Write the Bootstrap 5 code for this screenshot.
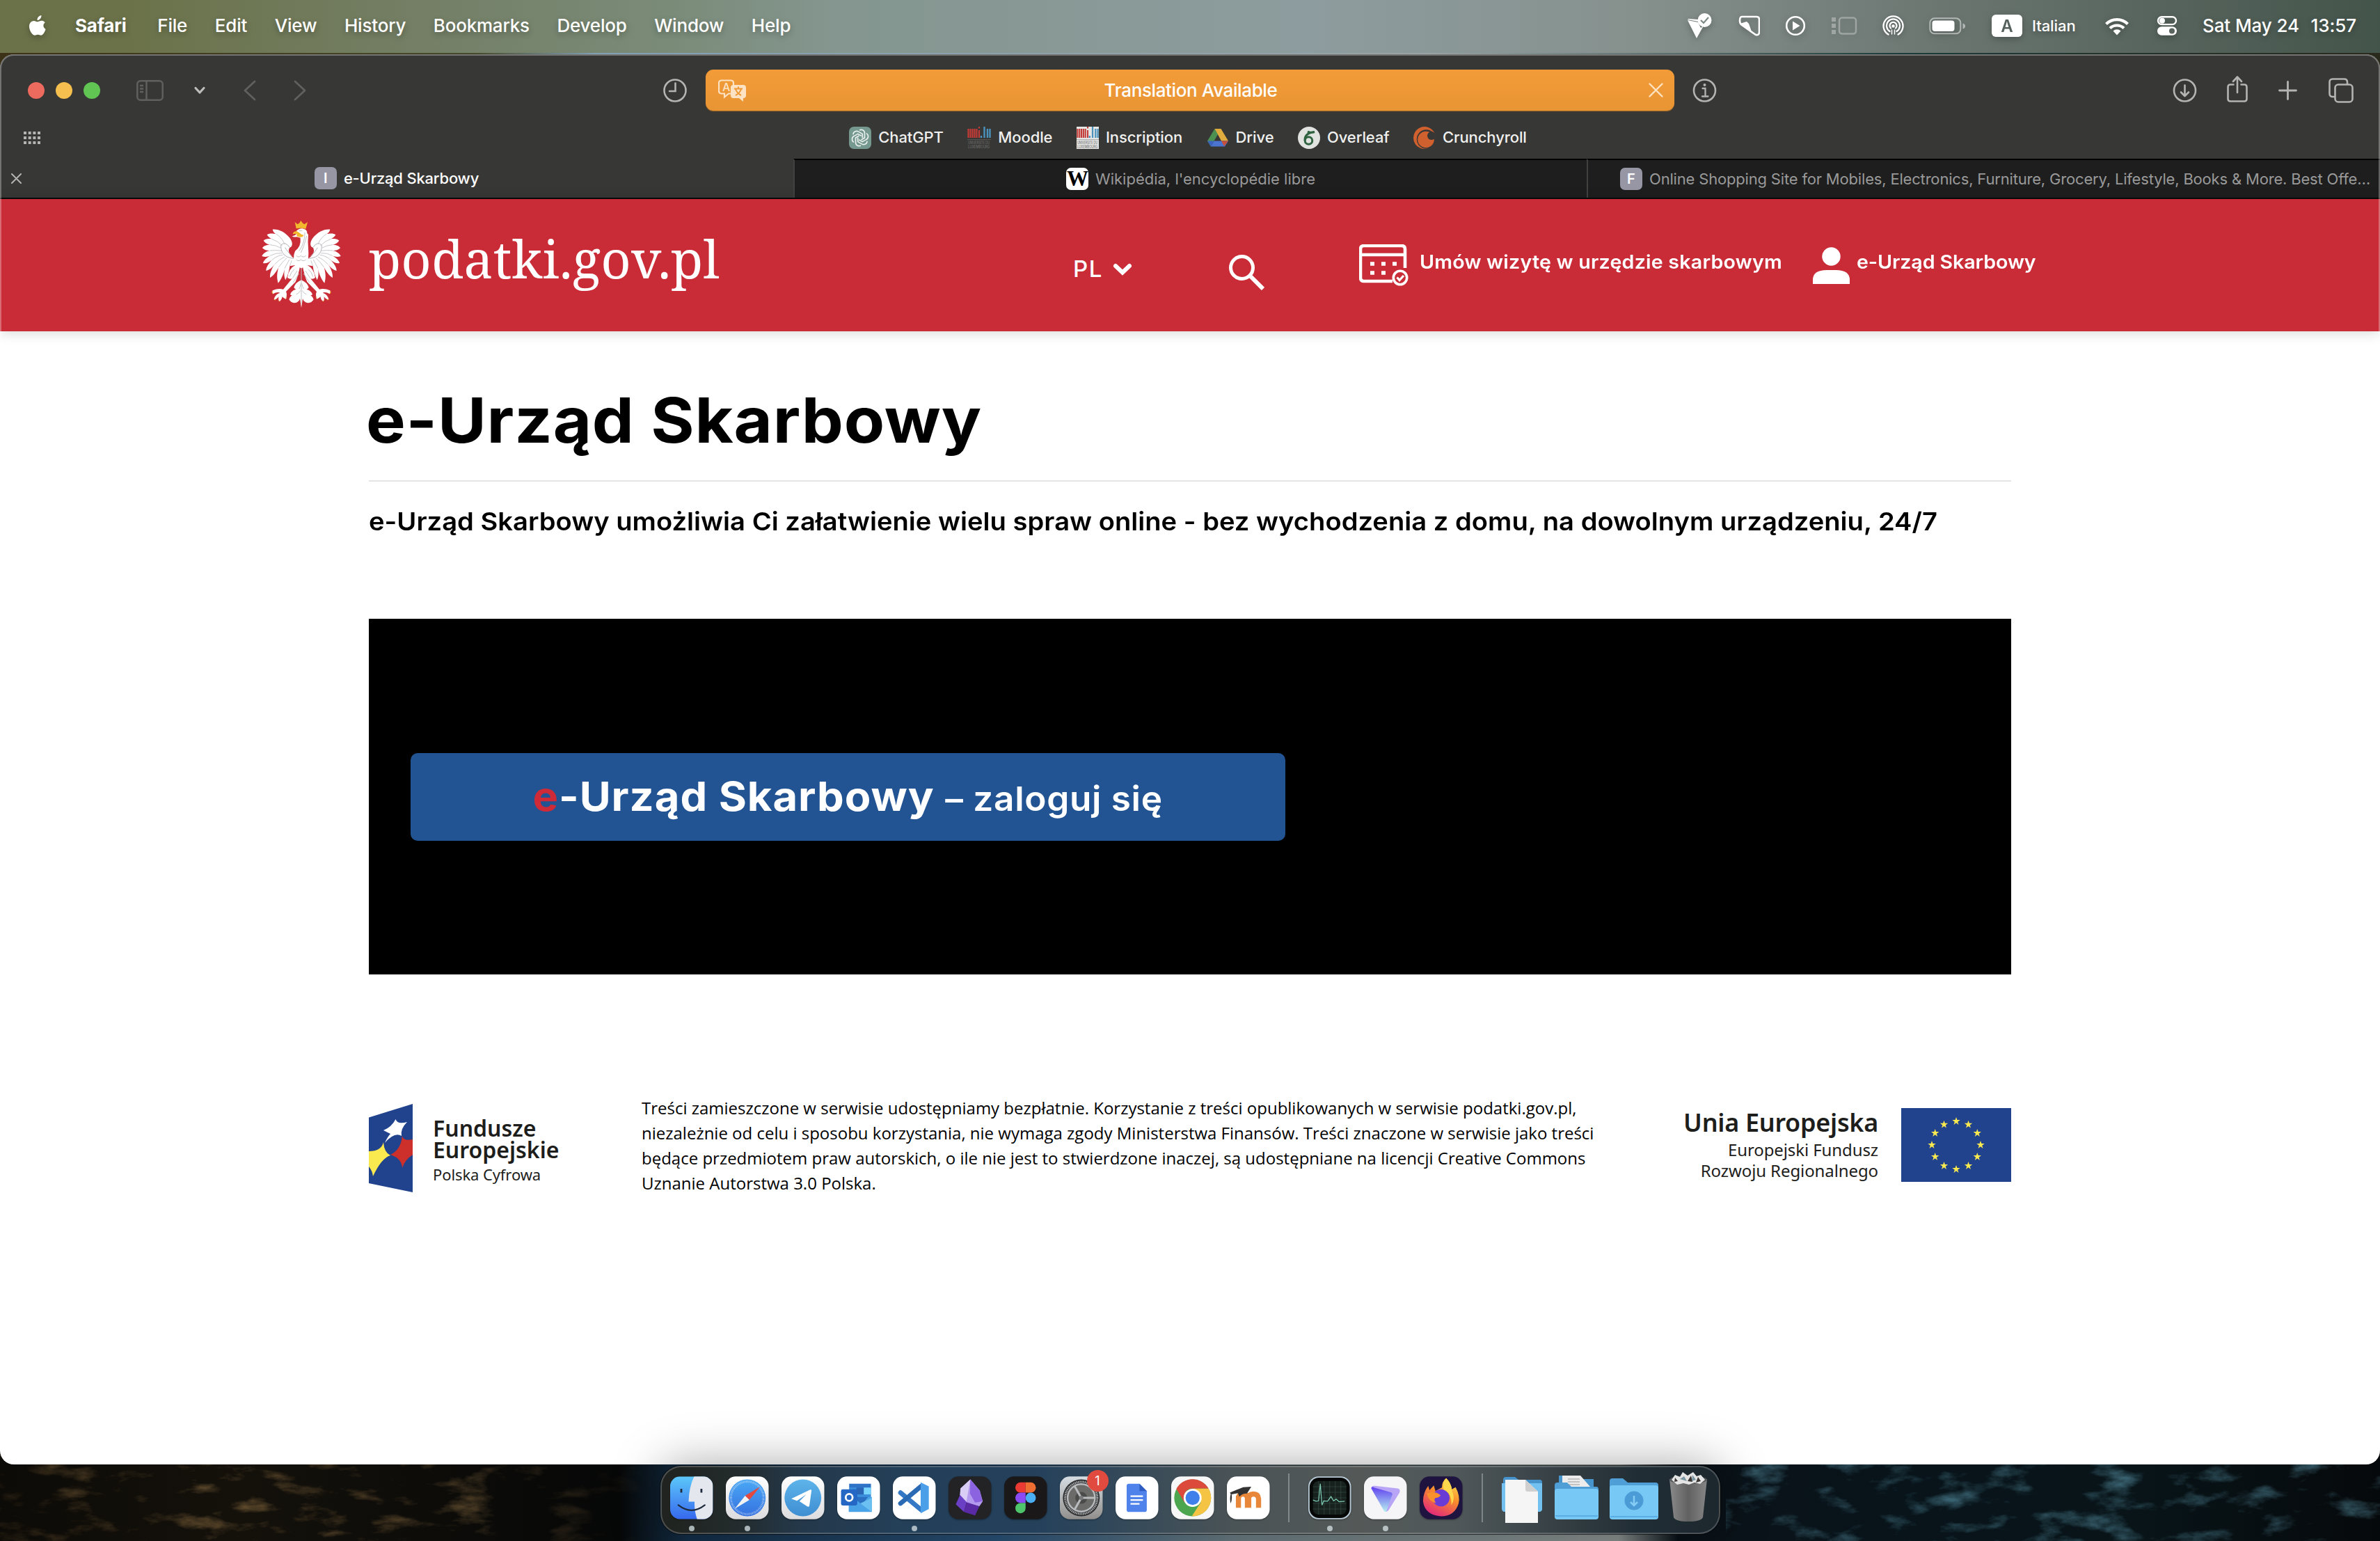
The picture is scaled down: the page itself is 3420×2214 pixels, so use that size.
<!DOCTYPE html>
<html lang="pl">
<head>
<meta charset="utf-8">
<meta name="viewport" content="width=device-width, initial-scale=1">
<title>e-Urząd Skarbowy</title>
<link rel="stylesheet" href="https://cdn.jsdelivr.net/npm/bootstrap@5.3.0/dist/css/bootstrap.min.css">
<style>
html,body{width:3420px;height:2214px;overflow:hidden}
body{font-family:Inter,"Liberation Sans",sans-serif;color:#000;background:#07090a;line-height:1.2;position:relative}
svg{display:block;flex:none}
.wallpaper{position:absolute;left:0;top:0;z-index:-1}
/* macOS menu bar */
.menubar{height:76px;padding:0 34px 2px 41px;color:#fff;font-size:26px;font-weight:500;background:linear-gradient(90deg,#6b7149 0,#6b7249 5%,#747f66 18%,#7a8b78 28%,#84968f 35%,#8d9c9e 55%,#87928f 68%,#737d79 78%,#5d6963 88%,#43544a 100%);text-shadow:0 3px 8px rgba(0,0,0,.3)}
.menubar svg{filter:drop-shadow(0 3px 5px rgba(0,0,0,.25))}
.menus{gap:39.6px;letter-spacing:-.2px;margin-left:41px}
.menus b{font-weight:700;margin-right:5px}
.tray{gap:36px}
.lang{gap:14px;font-size:22px;width:123px;white-space:nowrap}
.lang span{letter-spacing:-.1px}
.clockbox{width:221px;white-space:pre;letter-spacing:-.1px}
/* browser window */
.browser{height:2026px;margin-top:2px;background:#fff;border-radius:20px;overflow:hidden;position:relative}
.browser::after{content:"";position:absolute;inset:0;border-radius:20px;pointer-events:none;border:2px solid rgba(255,255,255,.3);border-bottom:0}
.chrome-ui{background:#373735;color:#f0f0ef}
.toolbar{height:103px}
.side{flex:none;width:1014px}
.light{width:24px;height:24px;border-radius:50%;margin-right:16px}
.address{width:1392px;height:59px;border-radius:11px;background:linear-gradient(#f29b38,#e99534);box-shadow:0 1px 1px #a56a23;padding:0 16px 0 18px;color:#fff;font-size:26px;font-weight:500;letter-spacing:-.38px}
.favs{height:47px;padding:0 6px 14px 34px;font-size:22px;font-weight:500}
.favlist{gap:34.5px;letter-spacing:-.1px}
.favlist>div,.tabx{gap:10px}
.tabs{height:58px;font-size:22px;border-bottom:2px solid #0a0a0a}
.tabx{flex:none;width:1140px;color:#999;background:#1e1e1e;border-top:2px solid #000;border-left:2px solid #414140;white-space:nowrap}
.tabx.on{background:#373735;color:#fff;font-weight:500;border:0}
.fav32{width:32px;height:32px;border-radius:7px;background:#9696a4;color:#fff;font-weight:600;font-size:20px;flex:none}
.wfav{background:#fff;color:#000;font-family:"Liberation Serif",serif;font-size:31px;letter-spacing:-1px}
/* site header */
.sitebar{height:190px;background:#c92b37;color:#fff;font-weight:600;font-size:27px;padding-left:376px;box-shadow:0 2px 18px rgba(0,0,0,.16);position:relative}
.brandname{font:400 75.5px/1 "Noto Serif",serif;margin-left:40px;padding-bottom:20px;width:1012px}
.lng{font-size:33px;font-weight:500;gap:13px;padding-top:12px;width:223px;letter-spacing:1.500px}
.visit{gap:15px;width:652px}
.acct{gap:10px}
.up{padding-bottom:7px}
/* the page face is broad: widen the glyphs themselves */
.wide{display:inline-block;transform:scaleX(1.06);transform-origin:0 50%;white-space:nowrap}
/* content */
.page{width:2360px;margin:0 auto}
.bigtitle{font-size:90px;line-height:90px;font-weight:700;letter-spacing:.75px;margin:0;padding:83px 0 41px;border-bottom:2px solid #e5e5e5;text-indent:-2px;color:#000}
.subt{font-size:36px;line-height:44px;font-weight:600;margin:35px 0 118px;white-space:nowrap}
.hero{height:511px;background:#000;padding-left:60px}
.login{width:1257px;height:126px;border-radius:10px;background:#225493;color:#fff;border:0;font-weight:700;font-size:58px;letter-spacing:.9px;padding:0}
.login:hover{background:#225493;color:#fff}
.login .wide{transform-origin:50% 50%}
.login em{color:#cf2a38;font-style:normal}
.login small{font-size:48.500px;font-weight:600;letter-spacing:.6px}
.foot{margin-top:174px;font-family:"Noto Sans","Open Sans",sans-serif;color:#1d1d1b}
.fe{margin-left:29px;margin-top:31px;width:300px;font-size:32px;line-height:31px;font-weight:600}
.fe p{margin:4px 0 0;font-size:22px;line-height:32px;font-weight:400;letter-spacing:-.1px}
.legal{width:1400px;font:400 24px/36px "Open Sans",sans-serif;color:#000;white-space:nowrap;margin:0}
.ue{text-align:right;width:377px;margin-top:17px;font-size:36px;line-height:44px;font-weight:600;white-space:nowrap;letter-spacing:-.3px}
.ue p{margin:2px 0 0;font-size:24px;line-height:30px;font-weight:400;letter-spacing:-.1px}
/* dock */
.dock{width:1523px;height:98px;margin:2px auto 0;border-radius:30px;position:relative;padding:0 16px 6px 12px;background:linear-gradient(90deg,#20231f 0,#232b2c 7%,#24384a 13%,#243f58 22%,#24405b 35%,#33495a 43%,#4a5356 54%,#545958 66%,#50585a 75%,#353f44 85%,#222e35 92%,#1c272e 100%);border:2px solid rgba(255,255,255,.2);box-shadow:0 0 0 1px rgba(0,0,0,.6),0 0 70px rgba(0,0,0,.36)}
.dapp{width:61.5px;height:62px;position:relative;flex:none}
.dapp svg{width:100%;height:100%;filter:drop-shadow(0 1px 1px rgba(0,0,0,.35));overflow:visible}
.dapp.run::after{content:"";position:absolute;left:27px;top:71px;width:8px;height:8px;border-radius:50%;background:rgba(215,225,230,.75)}
.apps{gap:18.5px}
.rule{width:2px;height:70px;background:rgba(255,255,255,.3)}
.note{position:absolute;left:39px;top:-9px;width:31px;height:31px;border-radius:50%;background:#e04a3f;color:#fff;font-size:18px;line-height:31px;text-align:center}
</style>
<script src="https://cdn.jsdelivr.net/npm/bootstrap@5.3.0/dist/js/bootstrap.bundle.min.js"></script>
</head>
<body>

<svg class="wallpaper" width="3420" height="2214" viewBox="0 0 3420 2214">
  <defs>
    <linearGradient id="wp" x1="0" x2="1"><stop offset="0" stop-color="#0d0b07"/><stop offset=".1" stop-color="#14110b"/><stop offset=".26" stop-color="#060707"/><stop offset=".29" stop-color="#14304a"/><stop offset=".42" stop-color="#2b5379"/><stop offset=".52" stop-color="#6d7f85"/><stop offset=".68" stop-color="#8d9492"/><stop offset=".705" stop-color="#0a1218"/><stop offset=".8" stop-color="#08141a"/><stop offset=".9" stop-color="#081418"/><stop offset="1" stop-color="#06090b"/></linearGradient>
    <linearGradient id="wt" x1="0" x2="1"><stop offset="0" stop-color="#3c3218"/><stop offset=".2" stop-color="#464a2a"/><stop offset=".25" stop-color="#81a0b4"/><stop offset=".6" stop-color="#9aa3a5"/><stop offset=".8" stop-color="#1c3b3a"/><stop offset="1" stop-color="#2a2a1c"/></linearGradient>
    <linearGradient id="fade" x1="0" x2="1"><stop offset="0" stop-color="#fff" stop-opacity=".5"/><stop offset=".3" stop-color="#fff"/><stop offset=".7" stop-color="#fff" stop-opacity=".8"/><stop offset="1" stop-color="#fff" stop-opacity="0"/></linearGradient>
    <mask id="mk1"><rect y="2070" width="940" height="144" fill="url(#fade)"/></mask>
    <filter id="n1" x="0" y="0" width="1" height="1"><feTurbulence type="fractalNoise" baseFrequency=".014 .04" numOctaves="6" seed="4"/><feColorMatrix values="0 0 0 0 .42  0 0 0 0 .24  0 0 0 0 .08  3 0 0 0 -1.6"/></filter>
    <filter id="n2" x="0" y="0" width="1" height="1"><feTurbulence type="fractalNoise" baseFrequency=".014 .035" numOctaves="6" seed="9"/><feColorMatrix values="0 0 0 0 .1  0 0 0 0 .3  0 0 0 0 .4  3 0 0 0 -1.6"/></filter>
  </defs>
  <rect y="74" width="3420" height="60" fill="url(#wt)"/>
  <rect y="2070" width="3420" height="144" fill="url(#wp)"/>
  <g mask="url(#mk1)"><rect y="2070" width="940" height="144" filter="url(#n1)" opacity=".55"/></g>
  <rect x="2480" y="2070" width="940" height="144" filter="url(#n2)" opacity=".6"/>
</svg>

<header class="menubar d-flex align-items-center justify-content-between">
  <div class="d-flex align-items-center">
    <svg width="26" height="31" viewBox="0 0 26 31" fill="#fff"><path d="M18.400 0c.2 2-.5 3.700-1.600 5-1.100 1.300-2.800 2.200-4.300 2.100-.2-1.800.6-3.600 1.600-4.800C15.200 1 17 .1 18.400 0zM23.700 10.600c-2.900 1.800-3.500 6.900.9 9.300-.9 2.600-3.500 8.800-6.700 8.800-1.600 0-2.300-1-4.400-1-2.100 0-2.900 1-4.400 1C5.600 28.700 1 22 1 15.900 1 10.700 4.400 7.900 7.700 7.900c2.200 0 3.800 1.400 5.200 1.400 1.300 0 3.400-1.500 6-1.500 1.100 0 3.300.4 4.800 2.800z"/></svg>
    <nav class="menus d-flex"><b>Safari</b><span>File</span><span>Edit</span><span>View</span><span>History</span><span>Bookmarks</span><span>Develop</span><span>Window</span><span>Help</span></nav>
  </div>
  <div class="tray d-flex align-items-center">
    <svg width="38" height="36" viewBox="0 0 38 36" fill="#fff"><path d="M1 10l15 3 4 8 4-3-10 18zM2 8l14 1v3L1 9z"/><circle cx="25.500" cy="10" r="10"/><path d="M20 10l4 4 7-8" fill="none" stroke="#7c8884" stroke-width="2.200"/></svg>
    <svg width="31" height="30" viewBox="0 0 31 30" fill="none" stroke="#fff" stroke-width="2.600"><path d="M5 2h21q4 0 4 4v18q0 5-5 4L5 14q-3-2-3-6 0-6 3-6z"/><path d="M2 12l10-3 3 3 5 14z" fill="#fff" stroke="none"/></svg>
    <svg width="30" height="30" viewBox="0 0 30 30"><circle cx="15" cy="15" r="12.800" fill="none" stroke="#fff" stroke-width="2.600"/><path d="M11 8.500l10.500 6.500L11 21.500z" fill="#fff"/></svg>
    <svg width="38" height="26" viewBox="0 0 38 26" opacity=".3"><rect x="12" y="1.500" width="24" height="23" rx="4" fill="none" stroke="#fff" stroke-width="2.500"/><path d="M1 1h6v6H1zM1 10h6v6H1zM1 19h6v6H1z" fill="#fff"/></svg>
    <svg width="31" height="31" viewBox="0 0 31 31" fill="none" stroke="#fff" stroke-width="2.300" stroke-linecap="round"><path d="M8.500 27.500a14 14 0 1 1 14 0M10.500 23a9.500 9.500 0 1 1 10 0M12 18.500a5 5 0 1 1 7 0"/><circle cx="15.500" cy="15.500" r="2.300" fill="#fff" stroke="none"/><path d="M13.500 21v6M17.500 21v6" stroke-width="1.500"/></svg>
    <svg width="54" height="25" viewBox="0 0 54 25"><rect x="1.300" y="1.300" width="44" height="22" rx="6.500" fill="none" stroke="#fff" stroke-opacity=".5" stroke-width="2"/><rect x="4.500" y="4.500" width="32" height="15.600" rx="4" fill="#fff"/><path d="M48.500 8.500q3.500 1 3.500 4t-3.500 4z" fill="#fff" opacity=".5"/></svg>
    <div class="lang d-flex align-items-center"><svg width="44" height="32" viewBox="0 0 44 32"><rect width="44" height="32" rx="6" fill="#fff"/><text x="22" y="25" text-anchor="middle" font-family="Inter" font-weight="600" font-size="24" fill="#56605c" style="text-shadow:none">A</text></svg><span>Italian</span></div>
    <svg width="42" height="27" viewBox="0 0 42 27" fill="none" stroke="#fff" stroke-width="4.200"><path d="M5.500 10.500a22 22 0 0 1 31 0M11 16.500a14.500 14.500 0 0 1 20 0"/><path d="M15.500 20.500a8 8 0 0 1 11 0L21 26.500z" fill="#fff" stroke="none"/></svg>
    <svg width="30" height="28" viewBox="0 0 30 28"><rect x="2" y="1.300" width="26" height="10.800" rx="5.400" fill="none" stroke="#fff" stroke-width="2.400"/><circle cx="8" cy="6.700" r="4" fill="#fff"/><rect x="1" y="15.300" width="28" height="12.400" rx="6.200" fill="#fff"/><circle cx="22" cy="21.500" r="4" fill="#5a655f"/></svg>
    <div class="clockbox d-flex justify-content-between"><span>Sat May 24</span><span>13:57</span></div>
  </div>
</header>

<main class="browser">
  <div class="chrome-ui">
    <div class="toolbar d-flex align-items-center">
      <div class="side d-flex align-items-center" style="padding-left:40px">
        <i class="light" style="background:#ed6a5e"></i><i class="light" style="background:#f5bf4f"></i><i class="light" style="background:#61c554"></i>
        <svg style="margin-left:36px" width="39" height="30" viewBox="0 0 39 30" fill="none" stroke="#60605e" stroke-width="2.500"><rect x="1.300" y="1.300" width="36.400" height="27.400" rx="4.500"/><path d="M14.500 1v28M5 8h5M5 12.500h5M5 17h5"/></svg>
        <svg style="margin-left:43px" width="18" height="12" viewBox="0 0 18 12" fill="none" stroke="#bdbdbb" stroke-width="3.200" stroke-linecap="round" stroke-linejoin="round"><path d="M3 2.500l6 6.500 6-6.500"/></svg>
        <svg style="margin-left:54px" width="18" height="30" viewBox="0 0 18 30" fill="none" stroke="#60605e" stroke-width="2.800" stroke-linecap="round" stroke-linejoin="round"><path d="M16 2L2 15l14 13"/></svg>
        <svg style="margin-left:54px" width="18" height="30" viewBox="0 0 18 30" fill="none" stroke="#60605e" stroke-width="2.800" stroke-linecap="round" stroke-linejoin="round"><path d="M2 2l14 13L2 28"/></svg>
        <svg class="ms-auto" style="margin-right:27px" width="34" height="34" viewBox="0 0 34 34" fill="none" stroke="#b4b4b2" stroke-width="2.600" stroke-linecap="round"><circle cx="17" cy="17" r="15.500"/><path d="M17.500 6.500V18H9"/></svg>
      </div>
      <div class="address d-flex align-items-center justify-content-between">
        <svg width="42" height="32" viewBox="0 0 42 32"><path d="M5 1.500h13q4 0 4 4v11q0 3.500-3 4h-4l-6 5v-5H5q-4 0-4-4v-11q0-4 4-4z" fill="none" stroke="#fde3c3" stroke-width="2.200"/><text x="6" y="17" font-family="Inter" font-weight="500" font-size="16" fill="#fde3c3">A</text><path d="M22 8h14q4 0 4 4v11q0 4-4 4v5l-6-5h-8q-4 0-4-4V12q0-4 4-4z" fill="#fde3c3"/><path d="M23 13.500h12M29 10.500v3M25 23q6-3 8-9M33 23q-6-3-8-9" fill="none" stroke="#ee9936" stroke-width="2"/></svg>
        <span>Translation Available</span>
        <svg style="margin-left:21px" width="21" height="21" viewBox="0 0 21 21" stroke="#fde3c3" stroke-width="2.400" stroke-linecap="round"><path d="M1.500 1.500l18 18M19.500 1.500l-18 18"/></svg>
      </div>
      <div class="side d-flex align-items-center" style="padding-right:38px">
        <svg style="margin-left:26px" width="35" height="34" viewBox="0 0 35 34" fill="none" stroke="#b4b4b2" stroke-width="2.600" stroke-linecap="round"><circle cx="17.500" cy="17" r="15.500"/><path d="M14.500 14h4v11M14 25.500h8.500" stroke-width="2.300"/><circle cx="17.500" cy="9" r="2" fill="#b4b4b2" stroke="none"/></svg>
        <svg class="ms-auto" width="35" height="34" viewBox="0 0 35 34" fill="none" stroke="#b4b4b2" stroke-width="2.600" stroke-linecap="round" stroke-linejoin="round"><circle cx="17.500" cy="17" r="15.500"/><path d="M17.500 9.500v15M12 19.500l5.500 5.500 5.500-5.500"/></svg>
        <svg style="margin:0 0 3px 43px" width="30" height="38" viewBox="0 0 30 38" fill="none" stroke="#b4b4b2" stroke-width="2.600" stroke-linecap="round" stroke-linejoin="round"><path d="M9.500 12.500H5q-3.500 0-3.500 3.500v17q0 3.500 3.500 3.500h20q3.500 0 3.500-3.500V16q0-3.500-3.500-3.500h-4.500M15 24V2M9 8l6-6.500L21 8"/></svg>
        <svg style="margin-left:44px" width="27" height="28" viewBox="0 0 27 28" stroke="#b4b4b2" stroke-width="2.800" stroke-linecap="round"><path d="M13.500 1.500v25M1.500 14h24"/></svg>
        <svg style="margin-left:45px" width="36" height="36" viewBox="0 0 36 36" fill="none" stroke="#b4b4b2" stroke-width="2.600"><rect x="9.500" y="9.500" width="25" height="25" rx="4.500"/><path d="M9 27H6q-4.500 0-4.500-4.500V6Q1.500 1.500 6 1.500h16.500Q27 1.500 27 6v3"/></svg>
      </div>
    </div>
    <div class="favs d-flex align-items-center">
      <svg width="24" height="18" viewBox="0 0 24 18" fill="#b4b4b2"><g id="dots"><path d="M0 0h4v4H0zM6.700 0h4v4h-4zM13.400 0h4v4h-4zM20 0h4v4h-4z"/></g><use href="#dots" y="7"/><use href="#dots" y="14"/></svg>
      <div class="favlist d-flex flex-fill justify-content-center" style="padding-right:58px">
        <div class="d-flex align-items-center"><svg width="32" height="32" viewBox="0 0 32 32"><rect width="32" height="32" rx="7" fill="#75998e"/><g fill="none" stroke="#e8efec" stroke-width="1.700"><g id="pt"><path d="M16 16m-1-11a5 5 0 0 1 7.500 4.500v6.500l-5 3"/></g><use href="#pt" transform="rotate(60 16 16)"/><use href="#pt" transform="rotate(120 16 16)"/><use href="#pt" transform="rotate(180 16 16)"/><use href="#pt" transform="rotate(240 16 16)"/><use href="#pt" transform="rotate(300 16 16)"/></g></svg><span>ChatGPT</span></div>
        <div class="d-flex align-items-center"><svg width="34" height="32" viewBox="0 0 34 32" overflow="visible"><g id="unilu"><path d="M1.500 3v13M4.500 3v13M7.500 3v13M10.500 3v13M13.500 3v13M17 5v11M17 0v2.500" stroke="#c23b36" stroke-width="2.200"/><path d="M20 13v3M24.500 0v16M29 3v13M32.500 3v13" stroke="#4b93bd" stroke-width="2.400"/></g><path d="M0 18.500h34" stroke="#555"/><text x="1" y="25" font-family="Inter" font-size="6" textLength="31" lengthAdjust="spacingAndGlyphs" fill="#6a6a68">UNIVERSITÉ DU</text><text x="1" y="31" font-family="Inter" font-size="6" textLength="31" lengthAdjust="spacingAndGlyphs" fill="#6a6a68">LUXEMBOURG</text></svg><span>Moodle</span></div>
        <div class="d-flex align-items-center"><svg width="32" height="32" viewBox="0 0 34 32" preserveAspectRatio="none" overflow="visible"><rect width="34" height="32" fill="#e6e6e4"/><use href="#unilu"/><path d="M0 18.500h34" stroke="#aaa"/><text x="1" y="25" font-family="Inter" font-size="6" textLength="31" lengthAdjust="spacingAndGlyphs" fill="#777">UNIVERSITÉ DU</text><text x="1" y="31" font-family="Inter" font-size="6" textLength="31" lengthAdjust="spacingAndGlyphs" fill="#777">LUXEMBOURG</text></svg><span>Inscription</span></div>
        <div class="d-flex align-items-center"><svg width="32" height="32" viewBox="0 0 32 32"><path d="M11.500 3L1 20.500l5 8L16 11z" fill="#4c9152"/><path d="M11.500 3h9L31 20.500H21z" fill="#e0ac3f"/><path d="M6 28.500l4.500-8H31l-5 8z" fill="#4a74d0"/><path d="M25 28l-4-7.500h10z" fill="#c94f3d"/><path d="M1 20.500h9.500L6 28.500z" fill="#3a62c0"/></svg><span>Drive</span></div>
        <div class="d-flex align-items-center"><svg width="32" height="32" viewBox="0 0 32 32"><circle cx="16" cy="16" r="16" fill="#e1e3e0"/><g fill="none" stroke="#2f6340" stroke-width="3"><circle cx="15.500" cy="20" r="5.300"/><path d="M10 20Q9.500 9 24 7.500M14 7q4 2.500 10 .5"/></g></svg><span>Overleaf</span></div>
        <div class="d-flex align-items-center"><svg width="32" height="32" viewBox="0 0 32 32"><circle cx="16" cy="16" r="16" fill="#d1602f"/><circle cx="18.500" cy="18" r="13.700" fill="#373735"/><circle cx="18" cy="18.500" r="11.800" fill="#d1602f"/><circle cx="26" cy="13" r="6" fill="#373735"/></svg><span>Crunchyroll</span></div>
      </div>
    </div>
    <div class="tabs d-flex align-items-stretch">
      <div class="tabx on d-flex align-items-center"><svg style="margin-left:16px" width="15" height="15" viewBox="0 0 15 15" stroke="#b4b4b2" stroke-width="2" stroke-linecap="round"><path d="M1 1l13 13M14 1L1 14"/></svg><div class="d-flex flex-fill align-items-center justify-content-center" style="gap:10px;padding-right:41px"><span class="fav32 d-flex align-items-center justify-content-center">I</span><span style="letter-spacing:-.2px">e-Urząd Skarbowy</span></div></div>
      <div class="tabx d-flex align-items-center justify-content-center"><span class="fav32 wfav d-flex align-items-center justify-content-center">W</span><span>Wikipédia, l'encyclopédie libre</span></div>
      <div class="tabx d-flex align-items-center" style="padding-left:46px"><span class="fav32 d-flex align-items-center justify-content-center">F</span><span style="letter-spacing:-.18px">Online Shopping Site for Mobiles, Electronics, Furniture, Grocery, Lifestyle, Books &amp; More. Best Offe…</span></div>
    </div>
  </div>

  <div class="sitebar d-flex align-items-center">
    <svg width="114" height="128" viewBox="19 31 342 384" style="margin-bottom:3px">
      <defs>
        <g id="wing">
          <path fill="#fff" d="M190 222L150 190C140 180 130 165 140 150C155 145 153 125 140 108C120 85 95 70 66 72C70 85 75 88 82 92C60 88 50 90 42 95C48 105 55 110 62 113C45 110 35 113 27 120C35 132 45 136 55 138C38 138 27 143 22 152C32 162 45 164 55 163C38 166 25 175 20 187C33 192 45 190 56 185C40 195 28 205 25 217C38 220 52 213 62 205C48 220 38 235 38 250C52 247 65 235 75 222C62 240 54 260 55 280C70 272 85 250 92 235C85 260 83 280 90 303C105 285 115 260 118 240C115 260 115 275 122 290C132 270 138 250 140 230L165 226Z"/>
          <path fill="none" stroke="#c9c9cd" stroke-width="3" d="M82 92Q105 105 118 135M62 113Q90 122 108 142M55 138Q82 140 102 152M55 163Q80 160 104 164M56 185Q80 172 106 174M62 205Q84 184 110 182M75 222Q96 200 118 190M92 235Q108 212 126 196M118 240Q130 218 138 202M140 230Q145 218 148 206"/>
          <path fill="none" stroke="#b5b5ba" stroke-width="3" d="M140 150Q120 120 102 140Q100 175 128 190Q150 200 170 196M120 150Q128 165 150 188"/>
          <path fill="#fff" d="M165 225Q135 240 130 280Q140 288 150 284L112 330Q90 325 66 335Q62 342 68 350Q85 340 98 345Q75 352 72 374Q82 376 92 362Q90 372 94 382Q104 380 108 362Q114 370 124 372Q130 350 124 340L165 298Q180 260 185 225Z"/>
          <path fill="#fff" d="M190 290Q165 300 158 322Q165 336 180 328Q150 330 142 352Q150 362 168 352Q140 355 137 374Q150 395 172 386Q182 380 184 370L190 410Z"/>
          <path fill="none" stroke="#c4c4c8" stroke-width="3" d="M152 282L172 250M140 275Q145 255 160 243M155 300L180 262M180 328Q186 318 188 305M168 352Q182 346 186 335"/>
          <path fill="#f2b92f" d="M64 337q4 8 4 13-8-4-4-13zM71 368q2 6 10 8-8 4-10-8zM90 376q4 6 10 5-5 6-10-5zM121 362q4 5 7 4-2 8-7-4z"/>
        </g>
      </defs>
      <use href="#wing"/><use href="#wing" transform="translate(380 0) scale(-1 1)"/>
      <path fill="#fff" d="M166 82Q175 68 195 68Q216 72 215 88L220 95Q217 125 220 155Q224 200 212 225L190 240L166 225Q150 195 163 165Q190 145 186 108L170 104Q155 106 150 101Q165 98 168 92Z"/>
      <path fill="none" stroke="#c2c2c6" stroke-width="3" d="M213 100Q200 150 188 172M205 85Q206 130 180 165M168 185q10 10 20 0q10 10 22 0M168 202q10 10 20 0q10 10 22 0M190 240V395M180 78h14"/>
      <path fill="#f2b92f" d="M170 79Q155 80 153 92Q162 90 172 92Q165 98 176 104Q198 108 200 96Q188 94 184 88ZM168 68L162 40L174 50L182 44L188 34L195 44L203 50L217 40L209 70Q190 64 168 68Z"/>
    </svg>
    <div class="brandname">podatki.gov.pl</div>
    <div class="lng d-flex align-items-center"><span>PL</span><svg width="30" height="20" viewBox="0 0 30 20" fill="none" stroke="#fff" stroke-width="6" stroke-linecap="round"><path d="M5 5l10 9.500L25 5"/></svg></div>
    <svg style="margin:20px 136px 0 0" width="52" height="52" viewBox="0 0 52 52" fill="none" stroke="#fff"><circle cx="19.500" cy="19.500" r="16" stroke-width="5"/><path d="M31 31l19 19" stroke-width="6"/></svg>
    <div class="visit d-flex align-items-center">
      <svg width="72" height="61" viewBox="0 0 72 61" fill="none" stroke="#fff"><path d="M48 53H7q-5 0-5-5V7q0-5 5-5h54q5 0 5 5v27M2 15h64" stroke-width="4.600"/><path d="M16 28h6M32 28h6M48 28h6M16 41h6M32 41h6" stroke-width="5.500"/><circle cx="59" cy="48" r="9.700" stroke-width="3.600"/><path d="M54.500 47.500l3.500 4 6-6.500" stroke-width="3.200"/></svg>
      <span class="up wide" style="letter-spacing:.2px">Umów wizytę w urzędzie skarbowym</span>
    </div>
    <div class="acct d-flex align-items-center"><svg width="53" height="53" viewBox="0 0 53 53" fill="#fff"><circle cx="26.500" cy="13.500" r="13.200"/><path d="M0 53V47Q0 33 20 33h13Q53 33 53 47v6z"/></svg><span class="up wide" style="letter-spacing:-.1px">e-Urząd Skarbowy</span></div>
  </div>

  <div class="page">
    <h1 class="bigtitle"><span class="wide">e-Urząd Skarbowy</span></h1>
    <h2 class="subt"><span class="wide">e-Urząd Skarbowy umożliwia Ci załatwienie wielu spraw online - bez wychodzenia z domu, na dowolnym urządzeniu, 24/7</span></h2>
    <div class="hero d-flex align-items-center"><a class="login btn d-flex align-items-center justify-content-center" href="#"><span class="wide"><em>e</em>-Urząd Skarbowy <small>– zaloguj się</small></span></a></div>
    <footer class="foot d-flex align-items-start">
      <svg style="margin-top:12px" width="63" height="127" viewBox="0 0 63 127"><defs><clipPath id="fe"><path d="M0 19.500L63 0v127L0 114z"/></clipPath></defs><g clip-path="url(#fe)"><path fill="#21428c" d="M0 0h63v127H0z"/><path fill="#fff" d="M38.500 22Q41 30 55 26Q45 36 47 46Q37 40 23 56Q27 47 31 43L21 38Q33 33 38.500 22z"/><path fill="#fbea4f" d="M0 68Q18 68 21 55Q22 70 31 74Q18 78 6 104Q5 96 0 90z"/><path fill="#cd2f2b" d="M48 46Q50 54 63 51V73Q52 80 48 92Q47 78 31 73Q46 66 48 46z"/></g></svg>
      <div class="fe">Fundusze<br>Europejskie<p>Polska Cyfrowa</p></div>
      <p class="legal">Treści zamieszczone w serwisie udostępniamy bezpłatnie. Korzystanie z treści opublikowanych w serwisie podatki.gov.pl,<br>niezależnie od celu i sposobu korzystania, nie wymaga zgody Ministerstwa Finansów. Treści znaczone w serwisie jako treści<br>będące przedmiotem praw autorskich, o ile nie jest to stwierdzone inaczej, są udostępniane na licencji Creative Commons<br>Uznanie Autorstwa 3.0 Polska.</p>
      <div class="ue">Unia Europejska<p>Europejski Fundusz<br>Rozwoju Regionalnego</p></div>
      <svg class="ms-auto" style="margin-top:18px" width="158" height="106" viewBox="0 0 158 106"><path fill="#21428c" d="M0 0h158v106H0z"/><defs><path id="st" fill="#fbea4f" d="M0-6L1.400-1.900H5.700L2.200.7 3.500 4.900 0 2.300-3.500 4.900-2.200.7-5.700-1.900H-1.400z"/></defs><use href="#st" x="79" y="19"/><use href="#st" x="96.500" y="23.700"/><use href="#st" x="109.300" y="36"/><use href="#st" x="114" y="53"/><use href="#st" x="109.300" y="70"/><use href="#st" x="96.500" y="83"/><use href="#st" x="79" y="88"/><use href="#st" x="61.500" y="83"/><use href="#st" x="48.700" y="70"/><use href="#st" x="44" y="53"/><use href="#st" x="48.700" y="36"/><use href="#st" x="61.500" y="23.700"/></svg>
    </footer>
  </div>
</main>

<div class="dock d-flex align-items-center justify-content-between">
  <svg width="0" height="0" style="position:absolute"><defs>
    <linearGradient id="gb" x2="0" y2="1"><stop stop-color="#5cc8fa"/><stop offset="1" stop-color="#3668ee"/></linearGradient>
    <linearGradient id="gw" x2="0" y2="1"><stop stop-color="#fff"/><stop offset="1" stop-color="#dcdcde"/></linearGradient>
    <linearGradient id="gs" x2="0" y2="1"><stop stop-color="#4aa8f5"/><stop offset="1" stop-color="#3672e0"/></linearGradient>
    <linearGradient id="gt" x2="0" y2="1"><stop stop-color="#5fb4ea"/><stop offset="1" stop-color="#3d8ed2"/></linearGradient>
    <linearGradient id="gg" x2="0" y2="1"><stop stop-color="#d5dde3"/><stop offset="1" stop-color="#918f8c"/></linearGradient>
    <linearGradient id="gp" x2="0" y2="1"><stop stop-color="#6040f0"/><stop offset="1" stop-color="#b5f0f0"/></linearGradient>
    <linearGradient id="gf" x1=".8" x2=".3" y2="1"><stop stop-color="#fde34e"/><stop offset=".45" stop-color="#f98b2c"/><stop offset="1" stop-color="#e2267c"/></linearGradient>
    <linearGradient id="gc" x2="1"><stop stop-color="#8a8a8a"/><stop offset=".5" stop-color="#616161"/><stop offset="1" stop-color="#868686"/></linearGradient>
  </defs></svg>
  <div class="apps d-flex">
    <div class="dapp run"><svg viewBox="0 0 100 100"><defs><clipPath id="rr"><rect width="100" height="100" rx="23"/></clipPath></defs><g clip-path="url(#rr)"><path fill="url(#gb)" d="M0 0h100v100H0z"/><path fill="#e4e7ee" d="M56 0Q44 25 43 59H57Q56 80 63 100H100V0z"/><path d="M26 29v9M73 29v9" stroke="#1d2a3c" stroke-width="4.500"/><path d="M19 67Q50 91 81 67" fill="none" stroke="#1d2a3c" stroke-width="3.500" stroke-linecap="round"/></g></svg></div>
    <div class="dapp run"><svg viewBox="0 0 100 100"><rect width="100" height="100" rx="23" fill="url(#gw)"/><circle cx="50" cy="50" r="43" fill="url(#gs)"/><circle cx="50" cy="50" r="38" fill="none" stroke="#fff" stroke-opacity=".75" stroke-width="5" stroke-dasharray="1 2.300"/><path fill="#e5483d" d="M80 24L45 45 55 55z"/><path fill="#f4f4f4" d="M21 75L45 45 55 55z"/></svg></div>
    <div class="dapp"><svg viewBox="0 0 100 100"><rect width="100" height="100" rx="23" fill="url(#gw)"/><circle cx="50" cy="50" r="43" fill="url(#gt)"/><path fill="#fff" d="M23 52L67 31Q71 30 70 34L65 69Q64 72 60 70L42 58 58 42 36 57z"/></svg></div>
    <div class="dapp"><svg viewBox="0 0 100 100"><rect width="100" height="100" rx="23" fill="#fff"/><path fill="#2f73c9" d="M28 17h51v10H28z"/><path fill="#3b8edb" d="M28 26h51v30H28z"/><path fill="#79d5fb" d="M62 26h17v16H62z"/><path fill="#2a64b5" d="M45 26h17v16H45z"/><path fill="#4aa3e6" d="M27 48h54v35H27z"/><path fill="#2b6fc2" d="M36 48h36L58 66z"/><path fill="#6cc0f1" d="M81 50v33L54 63z"/><rect x="9" y="30" width="38" height="38" rx="4" fill="#2467c5"/><circle cx="28" cy="49" r="8" fill="none" stroke="#fff" stroke-width="4.500"/></svg></div>
    <div class="dapp run"><svg viewBox="0 0 100 100"><rect width="100" height="100" rx="23" fill="#fff"/><path d="M18 38L66 78" stroke="#3579c6" stroke-width="11" stroke-linecap="round"/><path d="M18 63L66 23" stroke="#2a69b4" stroke-width="11" stroke-linecap="round"/><path fill="#4a9fe8" d="M65 14L84 23V76L65 86z"/></svg></div>
    <div class="dapp"><svg viewBox="0 0 100 100"><rect width="100" height="100" rx="23" fill="#232225"/><path fill="#b49aee" d="M51 7L28 28 26 50 44 62 72 70 80 58 73 33z"/><path fill="#d9cdf6" d="M51 7L28 28 27 44 42 58z"/><path fill="#8b62e0" d="M51 7L73 33 79 58 62 61 50 40z"/><path fill="#6a3fc6" d="M27 43L17 65 36 83 42 60z"/><path fill="#5a2aa5" d="M42 60L36 83 62 91 72 70z"/></svg></div>
    <div class="dapp"><svg viewBox="0 0 100 100"><rect width="100" height="100" rx="23" fill="#1a1818"/><path fill="#ea3a33" d="M50 14H38a12 12 0 0 0 0 24h12z"/><path fill="#ed6e30" d="M50 14h12a12 12 0 0 1 0 24H50z"/><path fill="#8a4bf4" d="M50 38H38a12 12 0 0 0 0 24h12z"/><circle cx="62" cy="50" r="12" fill="#4aaef3"/><path fill="#4fc56b" d="M50 62H38a12 12 0 1 0 12 12z"/></svg></div>
    <div class="dapp"><svg viewBox="0 0 100 100"><rect width="100" height="100" rx="23" fill="url(#gg)"/><circle cx="50" cy="50" r="43" fill="#2d2e30"/><circle cx="50" cy="50" r="37.500" fill="none" stroke="#a5a8aa" stroke-width="5" stroke-dasharray="2.500 1.500"/><circle cx="50" cy="50" r="32" fill="#6b6b69" stroke="#b9bcbe" stroke-width="4"/><circle cx="50" cy="50" r="14" fill="#4b4b4a"/><path d="M50 50H82M50 50L34 22M50 50L34 78" stroke="#b9bcbe" stroke-width="5"/><circle cx="50" cy="50" r="5" fill="#77797a"/></svg><span class="note">1</span></div>
    <div class="dapp"><svg viewBox="0 0 100 100"><rect width="100" height="100" rx="23" fill="#fff"/><path fill="#5082ec" d="M31 17H56L73 34V78q0 5-5 5H31q-5 0-5-5V22q0-5 5-5z"/><path fill="#2e5cc0" d="M56 17L73 34H56z"/><path d="M35 46h29M35 55h29M35 64h21" stroke="#fff" stroke-width="3.600"/></svg></div>
    <div class="dapp"><svg viewBox="0 0 100 100"><rect width="100" height="100" rx="23" fill="#f7f7f7"/><circle cx="50" cy="50" r="43" fill="#4ca650"/><path fill="#f6c445" d="M50 28H87A43 43 0 0 1 48 93L69 61z"/><path fill="#dc4a3c" d="M12 29A43 43 0 0 1 87 28H50Q34 28 30 44L31 61z"/><circle cx="50" cy="50" r="21" fill="#fff"/><circle cx="50" cy="50" r="16.500" fill="#4080ea"/></svg></div>
    <div class="dapp"><svg viewBox="0 0 100 100"><rect width="100" height="100" rx="23" fill="#fff"/><path d="M27 73V45M27 52Q27 41 37.500 41T48 52V73M51 73V52Q51 41 62 41T74 52V73" fill="none" stroke="#e8873a" stroke-width="12"/><path fill="#333" d="M7 38L38 25 57 24 47 40Q38 39 29 47L26 39 11 42Q13 52 9 63 6 52 9 41z"/></svg></div>
  </div>
  <i class="rule"></i>
  <div class="apps d-flex">
    <div class="dapp run"><svg viewBox="0 0 100 100"><rect width="100" height="100" rx="24" fill="#b8cad6"/><rect x="3" y="3" width="94" height="94" rx="22" fill="#060707"/><rect x="11" y="11" width="78" height="78" rx="12" fill="#17221f"/><path d="M24 11v78M37 11v78M50 11v78M63 11v78M76 11v78M11 24h78M11 37h78M11 50h78M11 63h78M11 76h78" stroke="#3b4f48" stroke-width="1"/><path d="M11 55l7 3 6-1 4-40 4 50 4-10 9 1 8-11 6 10 6-4 7 6 13-1" fill="none" stroke="#7ccbb2" stroke-width="2"/></svg></div>
    <div class="dapp run"><svg viewBox="0 0 100 100"><rect width="100" height="100" rx="23" fill="#f5f4f6"/><path fill="#b9a5f5" d="M18 25Q19 21 26 22L79 28Q86 30 83 38L58 78Q52 86 48 80L65 40z"/><path fill="url(#gp)" d="M17 28Q17 22 24 26L62 37Q69 39 65 46L52 82Q49 84 46 79z"/></svg></div>
    <div class="dapp"><svg viewBox="0 0 100 100"><rect width="100" height="100" rx="23" fill="#1f1440"/><path fill="url(#gf)" d="M62 4Q74 16 75 30L84 25Q95 45 91 63Q82 93 50 93Q12 90 8 58Q8 38 20 22L23 32 33 21 37 34Q44 30 52 26Q52 12 62 4z"/><circle cx="50" cy="50" r="20" fill="#6b3bd6"/><path fill="#f7902d" d="M17 40Q36 32 49 44Q44 51 37 50Q32 54 38 62Q20 58 17 40z"/><path fill="#fdd84c" d="M62 4Q74 16 76 34Q84 52 74 67Q76 40 56 31Q52 12 62 4z"/></svg></div>
  </div>
  <i class="rule"></i>
  <div class="d-flex align-items-center" style="gap:15px">
    <svg width="60" height="70" viewBox="0 0 60 70" style="margin-top:6px"><path fill="#4794cd" d="M2 6q0-4 4-4h13l5 4h31q3 0 3 4v40H2z"/><path fill="#72c1f1" d="M0 11h58v36q0 5-4 5H4q-4 0-4-5z"/><path fill="#f5f5f5" d="M5 6H34L52 23V68H5z"/><path fill="#cfcfcf" d="M34 6V20q0 3 3 3h15z"/></svg>
    <svg width="65" height="66" viewBox="0 0 65 66" style="margin-bottom:2px"><path fill="#4794cd" d="M7 2h8l4 5h38v18H7z"/><path fill="#ececec" d="M12 2h26l14 16v10H12z"/><path d="M20 7h17M20 11h17M20 15h17" stroke="#999"/><path fill="#4f9fd6" d="M1 16q0-4 4-4h14l6 6h36q3 0 3 4v10H1z"/><rect x="1" y="21" width="63" height="44" rx="4" fill="#78c8f6"/><path d="M2 60h61" stroke="#5aaee4" stroke-width="2"/></svg>
    <svg width="70" height="62" viewBox="0 0 70 62" style="margin-top:2px"><path fill="#4f9fd6" d="M0 6q0-4 4-4h15l7 6h40q4 0 4 4v14H0z"/><rect y="12" width="70" height="49" rx="4" fill="#78c8f6"/><path d="M1 57h68" stroke="#5aaee4" stroke-width="2"/><circle cx="35" cy="34" r="13.500" fill="#4a9bd6"/><path d="M35 27v13M30 36l5 5 5-5" fill="none" stroke="#86cdf5" stroke-width="2.500"/></svg>
    <svg width="56" height="72" viewBox="0 0 56 72" style="margin-bottom:2px"><path fill="url(#gc)" d="M1 10H55L49 65Q46 71 28 71T7 65z"/><ellipse cx="28" cy="11" rx="27" ry="6" fill="#55585a"/><path fill="#e4e4e4" d="M4 11L9 4l7 3 4-7 7 5 8-5 5 6 6-2 6 7-7 6-8-2-8 3-8-2-9 2z"/><path fill="#7c98a4" d="M16 10l6-4 4 7zM34 4l5 7-6 2z"/><path fill="#3c3634" d="M27 13l5-8 2 9zM42 7l4 6-7 2zM9 8l4 5-5 1z"/></svg>
  </div>
</div>
</body>
</html>
